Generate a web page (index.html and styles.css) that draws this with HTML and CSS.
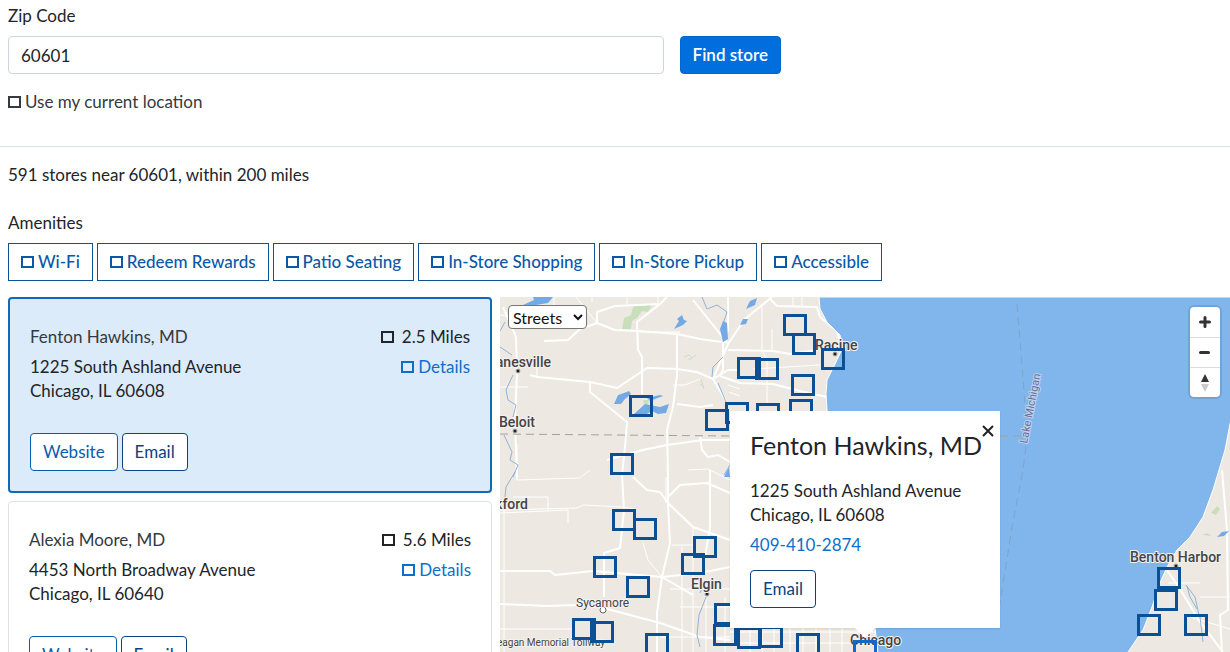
FILE: index.html
```html
<!DOCTYPE html>
<html lang="en">
<head>
<meta charset="utf-8">
<meta name="viewport" content="width=device-width, initial-scale=1">
<title>Store locator</title>
<link rel="stylesheet" href="styles.css">
</head>
<body>
<form class="search">
  <label class="search-label" for="zip">Zip Code</label>
  <div class="search-row">
    <input class="zip" id="zip" type="text" value="60601">
    <button class="btn btn-primary" type="submit">Find store</button>
  </div>
  <label class="locate"><input class="box" type="checkbox"><span>Use my current location</span></label>
</form>

<section class="filters">
  <p class="summary">591 stores near 60601, within 200 miles</p>
  <fieldset class="amenities">
    <legend class="amenities-title">Amenities</legend>
    <div class="amenity-list">
      <label class="amenity"><input class="box" type="checkbox"><span>Wi-Fi</span></label>
      <label class="amenity"><input class="box" type="checkbox"><span>Redeem Rewards</span></label>
      <label class="amenity"><input class="box" type="checkbox"><span>Patio Seating</span></label>
      <label class="amenity"><input class="box" type="checkbox"><span>In-Store Shopping</span></label>
      <label class="amenity"><input class="box" type="checkbox"><span>In-Store Pickup</span></label>
      <label class="amenity"><input class="box" type="checkbox"><span>Accessible</span></label>
    </div>
  </fieldset>
</section>

<main class="results">
  <div class="store-list">
    <article class="store store-active">
      <div class="store-head">
        <h2 class="store-name">Fenton Hawkins, MD</h2>
        <span class="distance"><i class="box"></i>2.5 Miles</span>
      </div>
      <div class="store-body">
        <address class="address">1225 South Ashland Avenue<br>Chicago, IL 60608</address>
        <a class="details" href="#details-1"><i class="box"></i>Details</a>
      </div>
      <div class="actions">
        <a class="btn btn-outline" href="#website-1">Website</a>
        <button class="btn btn-outline btn-dark" type="button">Email</button>
      </div>
    </article>
    <article class="store">
      <div class="store-head">
        <h2 class="store-name">Alexia Moore, MD</h2>
        <span class="distance"><i class="box"></i>5.6 Miles</span>
      </div>
      <div class="store-body">
        <address class="address">4453 North Broadway Avenue<br>Chicago, IL 60640</address>
        <a class="details" href="#details-2"><i class="box"></i>Details</a>
      </div>
      <div class="actions">
        <a class="btn btn-outline" href="#website-2">Website</a>
        <button class="btn btn-outline btn-dark" type="button">Email</button>
      </div>
    </article>
  </div>

  <div class="map">
    <svg class="map-canvas" width="100%" height="100%" aria-hidden="true">
      <g class="park">
        <path d="M133 10l6-3 13 1-4 7-6-1-5 7-5 3-1 8-9 0 2-11 7-3z"/>
        <path d="M143 103l6 0-1 4-4 1z"/>
      </g>
      <g class="park-line">
        <path d="M184 60l5-2 3 3 4-3M188 62l4 0M201 82l3 10M200 87l4 3"/>
      </g>
      <!-- secondary roads -->
      <g class="road-minor">
        <path d="M54 0V8M92 0V5M127 0V8M158 0V6M0 90H28M37 67V80M140 35H180M173 88L185 88 200 82M0 18L14 20M240 92L228 88M17 183L80 181 90 173M0 213L77 211 83 208 123 210 134 212M13 200H48V214M0 216L68 213V226M0 332H73M4 210V355M172 248H193M166 180V206M262 7V53L267 63V107M253 72L320 68M229 95L240 99M188 173L208 172 230 183M97 26L76 0M17 147V175M143 246L148 263 162 280M193 230V355M182 250V355M206 300V355M225 300V355M170 292H230M180 310H230M160 340H230M250 330V355M262 330V355M274 330V355M290 330V355M303 330V355M316 330V355M330 330V355M342 330V355M230 335H375M230 346H375M293 0V10M302 0V10M272 32V53M676 261L690 265M668 286H700M700 300H730M690 320L730 332"/>
      </g>
      <!-- main roads -->
      <g class="road">
        <path d="M3 10L16 40 17 75 15 125 17 183M44 44L68 43 80 32 97 26 115 33 138 34 177 37 200 42 222 45M97 26V15L115 9 160 7 167 0M160 7L137 25 138 53 142 60V97"/>
        <path d="M30 78L37 80 90 85 117 91 147 71 177 72 197 75 213 82 228 73 240 73M90 85V95L127 125 125 150 122 178 124 213 120 251 104 256V300"/>
        <path d="M177 37V78L173 110 167 133 168 180V206L170 246 162 280 157 316V355M193 3L217 33 228 47 213 82 226 104M228 47L245 22 272 0M177 107L200 110 213 108M107 163L143 153 167 148 203 143 230 143M200 140L202 153 208 160 218 158 230 165"/>
        <path d="M0 274H50L55 278 93 274 162 280 200 276 230 270M0 307L47 309 77 308 100 310 160 326 200 340 230 343M133 180L147 193 160 195 168 206 193 230 230 243M168 200L180 188 207 186 230 196M210 173V230L205 260M162 280L193 298"/>
        <path d="M228 0V33L223 47V73L220 78M270 2L277 9 317 10 320 20 337 34 340 45M228 53L273 54 290 57 317 53M220 79L240 86 273 87 300 94 327 100M722 173L727 233 728 313 720 318 722 355M667 273L680 292 700 325 723 355"/>
      </g>
      <g class="river">
        <path d="M5 25L0 34M0 50L12 58M13 78L6 93 8 103 16 108 13 120M4 138L12 155 10 163 18 168 13 180M15 175L6 190 5 200M202 0L207 12 217 8 227 15 222 30M223 60L213 70 212 80M218 86L226 105M230 168L224 178M206 300L199 318 197 338 200 350M687 289L690 300 697 312M686 288L695 300 699 318M205 285L200 296M700 320L703 345"/>
      </g>
      <g class="water">
        <path d="M23 8L34 3 33 0H53L48 6 36 8zM174 32L179 24 177 22 182 18 184 23 187 24 183 28zM220 32L223 24 227 26 228 42 223 45zM114 107L118 98 124 96 129 94 131 97 125 102 121 107zM134 117L145 107 160 110 169 107 166 116 158 117 152 114 145 118zM147 101L160 98 163 99 150 104zM246 12L250 4 257 1 255 8zM240 28L243 22 248 22 246 27zM224 180L229 170 230 180zM717 240L722 235 729 234 724 239z"/>
        <path class="lake" d="M319 0L320 12 327 25 340 38 343 50 336 65 327 83 326 97 327 113 340 220 375 331 378 355 400 900H560L628 355 643 333 652 310 660 286 667 270 677 253 690 240 703 220 713 193 719 173 725 153 730 127 760 0z"/>
      </g>
      <path class="park" d="M711 216L717 209 720 212 716 218zM702 238L707 236 712 239z"/>
      <path class="border" d="M0 137L230 139M500 139H526"/>
      <path class="border border-water" d="M517 7L523 80 527 140 523 173 512 230 500 306"/>
      <g class="place-dots">
        <circle cx="18" cy="74" r="2"/><circle cx="15" cy="134" r="2"/><circle cx="335" cy="57" r="2"/><circle cx="676" cy="269" r="2"/><circle cx="207" cy="297" r="2"/>
      </g>
      <circle class="place-ring" cx="103" cy="313" r="3"/>
      <g class="place">
        <text x="51" y="70" text-anchor="end">Janesville</text>
        <text x="35" y="130" text-anchor="end">Beloit</text>
        <text x="28" y="212" text-anchor="end">Rockford</text>
        <text x="191" y="292">Elgin</text>
        <text x="315" y="53">Racine</text>
        <text x="350" y="348">Chicago</text>
        <text x="630" y="265">Benton Harbor</text>
      </g>
      <text class="town" x="76" y="310">Sycamore</text>
      <text class="town road-name" x="105" y="349" text-anchor="end">Keagan Memorial Tollway</text>
      <text class="lake-name" transform="translate(527 147) rotate(-79)">Lake Michigan</text>
    </svg>

    <div class="markers">
      <button class="marker" type="button" aria-label="Store" style="left:129px;top:98px"></button>
      <button class="marker" type="button" aria-label="Store" style="left:110px;top:156px"></button>
      <button class="marker" type="button" aria-label="Store" style="left:205px;top:112px"></button>
      <button class="marker" type="button" aria-label="Store" style="left:225px;top:105px"></button>
      <button class="marker" type="button" aria-label="Store" style="left:256px;top:106px"></button>
      <button class="marker" type="button" aria-label="Store" style="left:289px;top:102px"></button>
      <button class="marker" type="button" aria-label="Store" style="left:291px;top:77px"></button>
      <button class="marker" type="button" aria-label="Store" style="left:237px;top:60px"></button>
      <button class="marker" type="button" aria-label="Store" style="left:255px;top:61px"></button>
      <button class="marker" type="button" aria-label="Store" style="left:283px;top:17px"></button>
      <button class="marker" type="button" aria-label="Store" style="left:292px;top:36px"></button>
      <button class="marker" type="button" aria-label="Store" style="left:321px;top:51px"></button>
      <button class="marker" type="button" aria-label="Store" style="left:112px;top:212px"></button>
      <button class="marker" type="button" aria-label="Store" style="left:133px;top:221px"></button>
      <button class="marker" type="button" aria-label="Store" style="left:193px;top:239px"></button>
      <button class="marker" type="button" aria-label="Store" style="left:181px;top:256px"></button>
      <button class="marker" type="button" aria-label="Store" style="left:93px;top:259px"></button>
      <button class="marker" type="button" aria-label="Store" style="left:126px;top:279px"></button>
      <button class="marker" type="button" aria-label="Store" style="left:72px;top:321px"></button>
      <button class="marker" type="button" aria-label="Store" style="left:90px;top:324px"></button>
      <button class="marker" type="button" aria-label="Store" style="left:145px;top:336px"></button>
      <button class="marker" type="button" aria-label="Store" style="left:214px;top:306px"></button>
      <button class="marker" type="button" aria-label="Store" style="left:213px;top:327px"></button>
      <button class="marker" type="button" aria-label="Store" style="left:237px;top:330px"></button>
      <button class="marker" type="button" aria-label="Store" style="left:259px;top:329px"></button>
      <button class="marker" type="button" aria-label="Store" style="left:296px;top:336px"></button>
      <button class="marker marker-active" type="button" aria-label="Store" style="left:353px;top:343px"></button>
      <button class="marker" type="button" aria-label="Store" style="left:657px;top:270px"></button>
      <button class="marker" type="button" aria-label="Store" style="left:654px;top:292px"></button>
      <button class="marker" type="button" aria-label="Store" style="left:637px;top:317px"></button>
      <button class="marker" type="button" aria-label="Store" style="left:684px;top:317px"></button>
    </div>

    <select class="map-style" aria-label="Map style"><option>Streets</option><option>Satellite</option></select>

    <div class="map-controls">
      <button class="map-control" type="button" aria-label="Zoom in"><svg width="30" height="30"><path class="stroke" d="M10.500 15h9M15 10.500v9"/></svg></button>
      <button class="map-control" type="button" aria-label="Zoom out"><svg width="30" height="30"><path class="stroke" d="M10.500 14.500h8"/></svg></button>
      <button class="map-control" type="button" aria-label="Reset north"><svg width="30" height="30"><path d="M11 14l4-8 4 8z" fill="#333"/><path d="M11 16l4 8 4-8z" fill="#ccc"/></svg></button>
    </div>

    <section class="popup">
      <button class="popup-close" type="button" aria-label="Close"><svg width="12" height="12"><path d="M1 1l10 10M11 1L1 11"/></svg></button>
      <h3 class="popup-title">Fenton Hawkins, MD</h3>
      <address class="address">1225 South Ashland Avenue<br>Chicago, IL 60608</address>
      <a class="phone" href="tel:4094102874">409-410-2874</a>
      <button class="btn btn-outline btn-dark" type="button">Email</button>
    </section>
  </div>
</main>
</body>
</html>
```
FILE: styles.css
```css
* { box-sizing: border-box; }

body {
  margin: 0;
  height: 100vh;
  display: flex;
  flex-direction: column;
  overflow: hidden;
  background: #fff;
  color: #212529;
  font-family: Lato, "Open Sans", sans-serif;
  font-size: 17px;
  line-height: 24px;
}

input, button, select { font: inherit; color: inherit; }
a { text-decoration: none; }

.search {
  display: flex;
  flex-direction: column;
  align-items: flex-start;
  padding: 4px 8px 32px;
  border-bottom: 1px solid #dee2e6;
}
.search-label { margin-bottom: 8px; }
.search-row {
  display: grid;
  grid-template-columns: 54% auto;
  justify-content: start;
  gap: 16px;
  width: 100%;
  margin-bottom: 16px;
}
.zip {
  min-width: 0;
  height: 38px;
  padding: 6px 12px;
  border: 1px solid #ced4da;
  border-radius: 4px;
  background: #fff;
}
.locate {
  display: flex;
  align-items: center;
  gap: 4px;
  color: #343a40;
}

.box {
  appearance: none;
  flex: none;
  width: 13px;
  height: 12px;
  margin: 0;
  border: 2px solid currentColor;
}

.btn {
  display: inline-block;
  height: 38px;
  padding: 6px 12px;
  border: 1px solid transparent;
  border-radius: 4px;
  white-space: nowrap;
}
.btn-primary {
  background: #006fdd;
  border-color: #0067cc;
  color: #fff;
  font-weight: 600;
}
.btn-outline {
  background: #fff;
  border-color: #0a5cad;
  color: #0a5cad;
}
.btn-dark {
  border-color: #0b4380;
  color: #0b4380;
}

.filters {
  display: flex;
  flex-direction: column;
  gap: 24px;
  padding: 16px 8px;
}
.summary { margin: 0; }
.amenities {
  min-width: 0;
  margin: 0;
  padding: 0;
  border: 0;
}
.amenities-title { padding: 0; margin-bottom: 8px; }
.amenity-list {
  display: flex;
  flex-wrap: wrap;
  gap: 4px;
}
.amenity {
  display: flex;
  align-items: center;
  gap: 4px;
  height: 38px;
  padding: 0 12px;
  border: 1px solid #0b5394;
  color: #0a58a8;
  font-weight: 500;
}

.results {
  flex: 1;
  min-height: 0;
  display: grid;
  grid-template-columns: 40% 1fr;
  grid-template-rows: 100%;
  column-gap: 8px;
}
.store-list {
  display: flex;
  flex-direction: column;
  gap: 8px;
  padding-left: 8px;
  overflow: hidden;
}
.store {
  flex: none;
  padding: 26px 20px 20px;
  border: 1px solid #dee2e6;
  border-radius: 4px;
}
.store-active {
  border: 2px solid #0f6bb8;
  background: #dcebfa;
}
.store-head, .store-body {
  display: flex;
  justify-content: space-between;
  align-items: flex-start;
}
.store-name {
  margin: 0 0 6px;
  font-size: inherit;
  font-weight: 400;
  color: #343a40;
}
.distance, .details {
  display: flex;
  align-items: center;
  gap: 4px;
}
.distance { gap: 8px; }
.details, .phone { color: #0f6fc8; }
.address { font-style: normal; }
.actions {
  display: flex;
  gap: 4px;
  margin-top: 30px;
}

.map {
  position: relative;
  overflow: hidden;
  background: #ede9e2;
}
.map-canvas { display: block; }
.road, .road-minor, .river, .park-line {
  fill: none;
  stroke: #fff;
  stroke-linejoin: round;
}
.road { stroke-width: 2px; }
.road-minor { stroke-width: 1px; }
.river { stroke: #8fb3d6; }
.park { fill: #c9dfbc; }
.park-line { stroke: #c9dfbc; }
.water { fill: #73aae6; }
.lake { fill: #81b6ec; stroke: #fff; stroke-width: 1px; }
.border {
  fill: none;
  stroke: #a5a19d;
  stroke-dasharray: 8 5;
}
.border-water { stroke: #7fa3cf; }
.place-dots { fill: #222; stroke: #aaa; }
.place-ring { fill: #fff; stroke: #666; }
.place, .town, .lake-name {
  font-family: Roboto, sans-serif;
  font-size: 14px;
  font-weight: 500;
  fill: #444;
  stroke: #f5f2ee;
  stroke-width: 2px;
  stroke-linejoin: round;
  paint-order: stroke;
}
.town { font-size: 12px; font-weight: 400; }
.road-name { font-size: 10px; }
.lake-name {
  font-size: 11px;
  font-weight: 400;
  fill: #6d6d98;
  stroke: #bdd5f0;
}

.marker {
  position: absolute;
  width: 24px;
  height: 22px;
  padding: 0;
  border: 3px solid #0b4f94;
  background: transparent;
}
.marker-active { border-color: #1469c7; }

.map-style {
  position: absolute;
  top: 8px;
  left: 8px;
  height: 24px;
  border: 1px solid #767676;
  border-radius: 4px;
  background: #fff;
  color: #111;
  font-size: 16px;
  line-height: 20px;
}

.map-controls {
  position: absolute;
  top: 10px;
  right: 10px;
  display: flex;
  flex-direction: column;
  overflow: hidden;
  border-radius: 4px;
  background: #fff;
  box-shadow: 0 0 0 2px rgba(0, 0, 0, .1);
}
.map-control {
  width: 30px;
  height: 30px;
  padding: 0;
  border: 0;
  background: transparent;
}
.map-control + .map-control { border-top: 1px solid #ddd; }
.map-control svg { display: block; }
.stroke {
  stroke: #333;
  stroke-width: 3px;
  stroke-linecap: round;
}

.popup {
  position: absolute;
  top: 114px;
  left: 230px;
  width: 270px;
  display: flex;
  flex-direction: column;
  align-items: flex-start;
  padding: 20px;
  background: #fff;
  box-shadow: 0 1px 2px rgba(0, 0, 0, .1);
}
.popup::after {
  content: "";
  position: absolute;
  top: 100%;
  left: 50%;
  margin-left: -10px;
  border: 10px solid transparent;
  border-top-color: #fff;
  border-bottom: 0;
}
.popup-title {
  margin: 0 0 20px;
  font-size: 25px;
  font-weight: 400;
  line-height: 28px;
  white-space: nowrap;
}
.phone { margin: 6px 0 13px; }
.popup-close {
  position: absolute;
  top: 14px;
  right: 6px;
  padding: 0;
  border: 0;
  background: transparent;
  line-height: 12px;
}
.popup-close svg {
  display: block;
  stroke: #222;
  stroke-width: 2px;
}
```
